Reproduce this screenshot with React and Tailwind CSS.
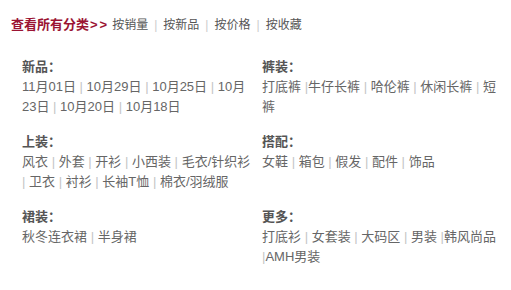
import React from "react";

const Sep = ({ l = true, r = true }) => (
  <>
    {l ? " " : ""}
    <span className="text-[#c4c4c4]">|</span>
    {r ? " " : ""}
  </>
);

function List({ items }) {
  return (
    <div className="text-[13px] leading-[20px] text-[#666]">
      {items.map((it, i) => {
        const [t, l, r] = Array.isArray(it) ? it : [it, true, true];
        return (
          <React.Fragment key={i}>
            {i > 0 && <Sep l={l} r={r} />}
            <span>{t}</span>
          </React.Fragment>
        );
      })}
    </div>
  );
}

function Section({ label, items }) {
  return (
    <div className="flex flex-col">
      <div className="text-[13px] leading-[20px] font-bold text-[#555]">{label}</div>
      <List items={items} />
    </div>
  );
}

export default function App() {
  const font = { fontFamily: '"Liberation Sans", "Noto Sans CJK SC", sans-serif' };
  return (
    <div className="w-[511px] h-[290px] bg-white overflow-hidden" style={font}>
      <div className="pl-[11px] pt-[15px] flex items-center h-[35px] leading-[20px]">
        <span className="text-[13px] font-bold text-[#9b1433]">
          查看所有分类<span className="ml-[1px] tracking-[2px]">&gt;&gt;</span>
        </span>
        <span className="ml-[3px] text-[12px] text-[#555]">按销量</span>
        <span className="mx-[6px] text-[12px] text-[#ccc]">|</span>
        <span className="text-[12px] text-[#555]">按新品</span>
        <span className="mx-[6px] text-[12px] text-[#ccc]">|</span>
        <span className="text-[12px] text-[#555]">按价格</span>
        <span className="mx-[6px] text-[12px] text-[#ccc]">|</span>
        <span className="text-[12px] text-[#555]">按收藏</span>
      </div>
      <div className="mt-[22px] pl-[22px] grid grid-cols-[230px_236px] gap-x-[10px] gap-y-[15px] auto-rows-[60px]">
        <Section
          label="新品："
          items={["11月01日", "10月29日", "10月25日", "10月23日", "10月20日", "10月18日"]}
        />
        <Section
          label="裤装："
          items={["打底裤", ["牛仔长裤", true, false], "哈伦裤", "休闲长裤", "短裤"]}
        />
        <Section
          label="上装："
          items={["风衣", "外套", "开衫", "小西装", "毛衣/针织衫", "卫衣", "衬衫", "长袖T恤", "棉衣/羽绒服"]}
        />
        <Section label="搭配：" items={["女鞋", "箱包", "假发", "配件", "饰品"]} />
        <Section label="裙装：" items={["秋冬连衣裙", "半身裙"]} />
        <Section
          label="更多："
          items={["打底衫", "女套装", "大码区", "男装", ["韩风尚品", true, false], ["AMH男装", true, false]]}
        />
      </div>
    </div>
  );
}
